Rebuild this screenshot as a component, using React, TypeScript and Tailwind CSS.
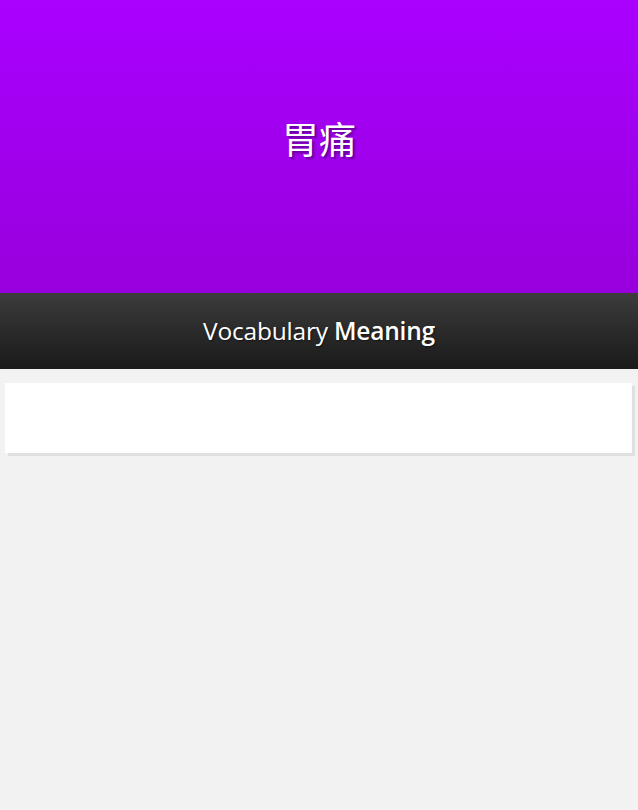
import React from 'react';

const App: React.FC = () => {
  return (
    <div className="min-h-[810px] w-full bg-[#f2f2f2]">
      {/* Word header */}
      <div className="h-[293px] w-full bg-gradient-to-b from-[#aa00ff] to-[#9700dc] flex items-center justify-center">
        <h1
          className="text-white text-[37px] font-normal leading-none pb-[16px] [text-shadow:2px_2px_2px_rgba(70,0,110,0.7)]"
          style={{ fontFamily: '"Noto Sans CJK SC", "Noto Sans CJK JP", sans-serif' }}
        >
          胃痛
        </h1>
      </div>

      {/* Title bar */}
      <div className="h-[76px] w-full bg-gradient-to-b from-[#3c3c3c] to-[#1a1a1a] flex items-center justify-center">
        <h2
          className="text-white text-[24.5px] leading-none tracking-[-0.2px] [text-shadow:1px_1px_2px_rgba(0,0,0,0.5)]"
          style={{ fontFamily: '"Open Sans", "Noto Sans", sans-serif' }}
        >
          <span className="font-normal">Vocabulary</span> <span className="font-semibold">Meaning</span>
        </h2>
      </div>

      {/* Meaning card */}
      <div className="px-[5px] pt-[14px]">
        <div className="h-[70px] w-[627px] bg-white shadow-[3px_3px_0_#e0e0e0]" />
      </div>
    </div>
  );
};

export default App;
